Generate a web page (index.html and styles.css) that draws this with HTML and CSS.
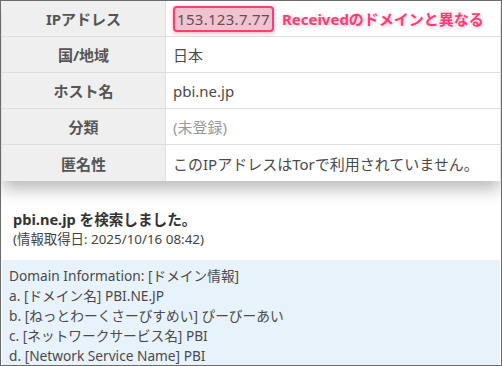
FILE: index.html
```html
<!DOCTYPE html>
<html lang="ja">
<head>
<meta charset="utf-8">
<title>IP情報</title>
<link rel="stylesheet" href="styles.css">
</head>
<body>
<div class="frame">
  <table class="info">
    <tr>
      <th>IPアドレス</th>
      <td><span class="ip">153.123.7.77</span><span class="note">Receivedのドメインと異なる</span></td>
    </tr>
    <tr>
      <th>国/地域</th>
      <td>日本</td>
    </tr>
    <tr>
      <th>ホスト名</th>
      <td>pbi.ne.jp</td>
    </tr>
    <tr>
      <th>分類</th>
      <td class="muted">(未登録)</td>
    </tr>
    <tr>
      <th>匿名性</th>
      <td>このIPアドレスはTorで利用されていません。</td>
    </tr>
  </table>

  <div class="search">
    <p class="title">pbi.ne.jp を検索しました。</p>
    <p class="date">(情報取得日: 2025/10/16 08:42)</p>
  </div>

  <div class="whois">
    <div>Domain Information: [ドメイン情報]</div>
    <div>a. [ドメイン名] PBI.NE.JP</div>
    <div>b. [ねっとわーくさーびすめい] ぴーびーあい</div>
    <div>c. [ネットワークサービス名] PBI</div>
    <div>d. [Network Service Name] PBI</div>
  </div>
</div>
</body>
</html>
```

FILE: styles.css
```css
html, body {
  margin: 0;
  padding: 0;
  background: #fff;
}

body {
  font-family: "Noto Sans", "Noto Sans CJK JP", sans-serif;
  color: #444;
}

.frame {
  box-sizing: border-box;
  width: 502px;
  height: 366px;
  border: 1px solid #6b6b6b;
  overflow: hidden;
  padding: 0 1px 0 1px;
}

.info {
  width: 100%;
  border-collapse: collapse;
  box-shadow: 0 8px 16px rgba(0, 0, 0, 0.28);
  font-size: 15px;
}

.info th,
.info td {
  height: 35px;
  padding: 0;
  border-bottom: 1px solid #dedede;
}

.info tr:last-child th,
.info tr:last-child td {
  border-bottom: none;
  height: 36px;
}

.info th {
  width: 163px;
  background: #efefef;
  color: #555;
  font-weight: bold;
  text-align: center;
  border-right: 1px solid #e0e0e0;
}

.info td {
  background: #fff;
  padding-left: 7px;
  color: #4a4a4a;
}

.info td.muted {
  color: #9a9a9a;
}

.ip {
  display: inline-block;
  padding: 1px 2px;
  background: #f0c4cf;
  border: 2px solid #ff3d6f;
  border-radius: 4px;
  box-shadow: 0 1px 4px rgba(255, 61, 111, 0.45);
  color: #6a4a55;
  letter-spacing: 0.3px;
}

.note {
  margin-left: 8px;
  color: #ff3d74;
  font-weight: bold;
  text-shadow: 0 1px 4px rgba(255, 61, 116, 0.35);
}

.search {
  padding: 28px 0 0 11px;
  height: 51px;
}

.search p {
  margin: 0;
}

.title {
  font-size: 14.6px;
  font-weight: bold;
  color: #333;
  line-height: 20px;
}

.date {
  font-size: 13.4px;
  color: #444;
  line-height: 21px;
}

.whois {
  background: #e8f2fb;
  padding: 6px 0 0 7px;
  font-size: 13.7px;
  line-height: 20px;
  color: #4a4a4a;
  height: 200px;
}
```
